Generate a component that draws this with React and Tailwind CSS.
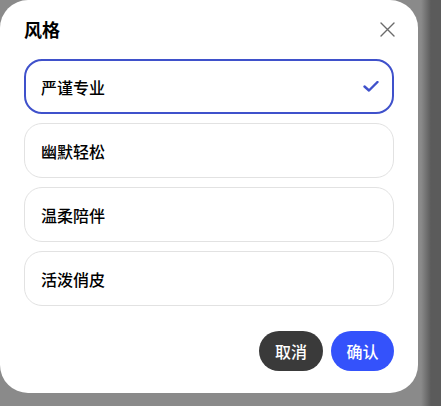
import React, { useState } from "react";

const options = ["严谨专业", "幽默轻松", "温柔陪伴", "活泼俏皮"];

export default function App() {
  const [selected, setSelected] = useState(0);

  return (
    <div
      className="w-[441px] h-[406px] overflow-hidden bg-[linear-gradient(to_right,#8a8a8a_421px,#5b5b5b_431px)]"
      style={{ fontFamily: '"Noto Sans CJK SC", "Noto Sans", sans-serif' }}
    >
      {/* Dialog */}
      <div className="w-[418px] h-[393px] bg-white rounded-[28px] px-6 pt-[17px] flex flex-col">
        {/* Header */}
        <div className="flex items-center justify-between h-6">
          <h2 className="text-[18px] leading-6 font-semibold text-black">风格</h2>
          <button className="w-4 h-4 flex items-center justify-center text-[#6b6b6b] -mr-[1px]">
            <svg width="15" height="15" viewBox="0 0 15 15" fill="none" stroke="currentColor" strokeWidth="1.4" strokeLinecap="round">
              <path d="M1 1l13 13M14 1L1 14" />
            </svg>
          </button>
        </div>

        {/* Options */}
        <div className="mt-[18px] flex flex-col gap-[9px]">
          {options.map((label, i) => (
            <button
              key={label}
              onClick={() => setSelected(i)}
              className={
                i === selected
                  ? "h-[55px] rounded-[18px] border-2 border-[#3f51cb] flex items-center justify-between pl-[15px] pr-[13px] text-left"
                  : "h-[55px] rounded-[18px] border border-[#e2e2e2] flex items-center justify-between pl-4 pr-4 text-left"
              }
            >
              <span className="text-[16px] font-medium text-black">{label}</span>
              {i === selected && (
                <svg width="16" height="11" viewBox="0 0 16 11" fill="none" stroke="#3f51cb" strokeWidth="2.4" strokeLinecap="round" strokeLinejoin="round">
                  <path d="M1.5 5.5l4.5 4 8.5-8.5" />
                </svg>
              )}
            </button>
          ))}
        </div>

        {/* Actions */}
        <div className="mt-[25px] flex justify-end gap-2">
          <button className="h-10 w-16 rounded-full bg-[#3a3a3a] text-white text-[16px] font-medium">
            取消
          </button>
          <button className="h-10 w-[63px] rounded-full bg-[#3452fb] text-white text-[16px] font-medium">
            确认
          </button>
        </div>
      </div>
    </div>
  );
}
